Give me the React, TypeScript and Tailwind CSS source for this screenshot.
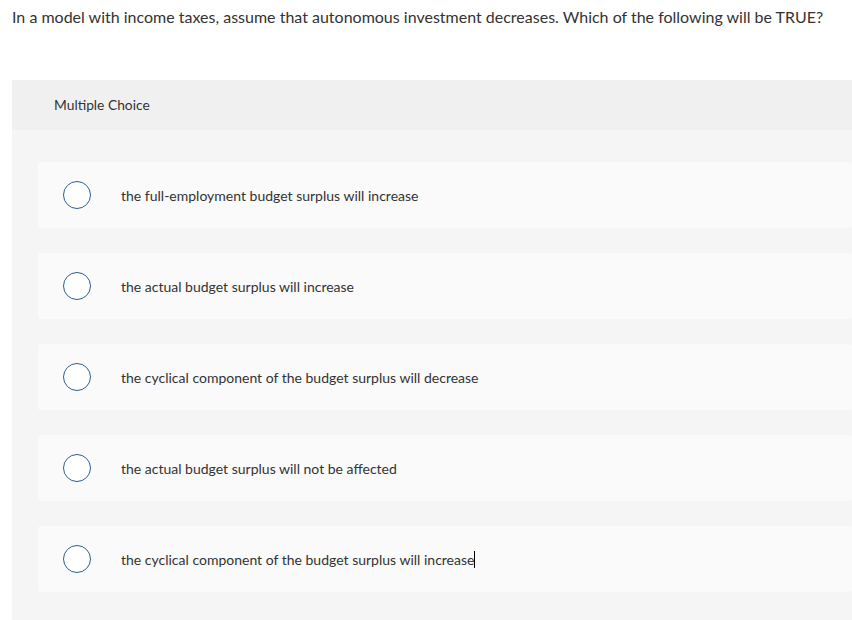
import React from 'react';

const options = [
  'the full-employment budget surplus will increase',
  'the actual budget surplus will increase',
  'the cyclical component of the budget surplus will decrease',
  'the actual budget surplus will not be affected',
  'the cyclical component of the budget surplus will increase',
];

export default function App() {
  return (
    <div className="w-[852px] h-[620px] overflow-hidden bg-white text-[#333] font-['Lato','Liberation_Sans',sans-serif]">
      <p className="pl-3 pt-[8px] text-[16px] leading-[18px]">
        In a model with income taxes, assume that autonomous investment decreases. Which of the following will be TRUE?
      </p>

      <div className="ml-3 mt-[54px]">
        {/* header band */}
        <div className="h-[50px] bg-[#f0f0f0] pl-[42px] flex items-center text-[13.8px]">
          Multiple Choice
        </div>

        {/* answers */}
        <div className="bg-[#f5f5f5] pl-[26px] pt-8 pb-10 flex flex-col gap-[25px]">
          {options.map((opt, i) => (
            <div key={i} className="h-[66px] bg-[#fafafa] rounded-[3px] flex items-center">
              <span className="ml-[25px] w-[28px] h-[28px] rounded-full border-[1.5px] border-[#2d5f8f] bg-white shrink-0" />
              <span className="ml-[30px] text-[14px]">
                {opt}
                {i === options.length - 1 && <span className="inline-block w-px h-[17px] bg-black align-middle -mt-[2px]" />}
              </span>
            </div>
          ))}
        </div>
      </div>
    </div>
  );
}
